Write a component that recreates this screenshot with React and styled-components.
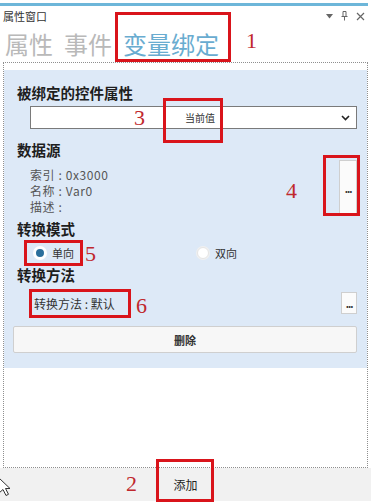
import React from 'react';
import styled, { createGlobalStyle } from 'styled-components';

const GlobalStyle = createGlobalStyle`
    html, body {
        margin: 0;
        padding: 0;
        background: #fff;
    }
    body {
        font-family: "Noto Sans CJK SC", "Noto Sans", sans-serif;
        color: #222;
    }
`;

const Window = styled.div`
    position: relative;
    width: 371px;
    height: 502px;
    overflow: hidden;
    background: #fff;
`;

const AccentLine = styled.div`
    margin-top: 3px;
    width: 368px;
    height: 3px;
    background: #6db6d9;
`;

const TitleBar = styled.div`
    display: flex;
    align-items: center;
    justify-content: space-between;
    height: 16px;
    padding: 2px 6px 0 3px;
`;

const Title = styled.span`
    font-size: 11px;
    line-height: 16px;
    color: #333;
`;

const TitleIcons = styled.div`
    display: flex;
    align-items: center;
    gap: 8px;
    color: #666;
`;

const Tabs = styled.div`
    display: flex;
    align-items: flex-end;
    gap: 11px;
    height: 38px;
    padding-left: 5px;
`;

const Tab = styled.span`
    font-size: 24px;
    line-height: 36px;
    color: ${p => (p.$active ? '#69acd0' : '#b9b9b9')};
`;

const Panel = styled.div`
    margin: 0 3px 0 3px;
    height: 406px;
    border: 1px dotted #8f8f8f;
    padding-top: 7px;
    box-sizing: border-box;
`;

const Section = styled.div`
    background: #dde9f7;
    height: 298px;
    padding: 14px 10px 0 13px;
    box-sizing: border-box;
`;

const Heading = styled.div`
    font-size: 14.5px;
    font-weight: 700;
    line-height: 18px;
    color: #1e1e1e;
    margin-top: ${p => p.$top || 0}px;
`;

const Select = styled.div`
    display: flex;
    align-items: center;
    margin: 4px 0 0 13px;
    height: 23px;
    background: #fff;
    border: 1px solid #7a7a7a;
    box-sizing: border-box;
    padding: 0 6px 0 154px;
`;

const SelectValue = styled.span`
    flex: 1;
    font-size: 10px;
    color: #333;
`;

const SourceRow = styled.div`
    display: flex;
    justify-content: space-between;
    align-items: flex-start;
    margin-top: 1px;
`;

const InfoList = styled.div`
    padding: 7px 0 0 13px;
`;

const InfoLine = styled.div`
    font-size: 12px;
    line-height: 16px;
    letter-spacing: 0.6px;
    color: #555;
`;

const MoreButton = styled.div`
    display: flex;
    align-items: center;
    justify-content: center;
    width: ${p => p.$w}px;
    height: ${p => p.$h}px;
    background: #fbfbfb;
    border: 1px solid #cfcfcf;
    box-sizing: border-box;
    font-size: 10px;
    font-weight: 700;
    color: #333;
    letter-spacing: -1px;
`;

const RadioRow = styled.div`
    display: flex;
    align-items: center;
    height: 20px;
    margin-top: 5px;
    padding-left: 17px;
`;

const Radio = styled.label`
    display: flex;
    align-items: center;
    gap: 6px;
    width: ${p => p.$w || 'auto'};
    font-size: 11px;
    color: #333;
`;

const Dot = styled.span`
    width: 12px;
    height: 12px;
    border-radius: 50%;
    box-sizing: border-box;
    background: ${p => (p.$on ? '#2b6f9c' : '#fff')};
    border: ${p => (p.$on ? '2px solid #fff' : '1px solid #e5e5e5')};
    box-shadow: 0 0 0 1px ${p => (p.$on ? '#fff' : '#f0f0f0')};
`;

const MethodRow = styled.div`
    display: flex;
    align-items: center;
    justify-content: space-between;
    margin-top: 6px;
    height: 26px;
`;

const MethodText = styled.span`
    padding-left: 17px;
    font-size: 12px;
    color: #333;
`;

const DeleteButton = styled.div`
    margin: 10px 0 0 -4px;
    height: 27px;
    display: flex;
    align-items: center;
    justify-content: center;
    background: #f7f7f7;
    border: 1px solid #cfcfcf;
    border-radius: 2px;
    box-sizing: border-box;
    font-size: 11px;
    font-weight: 700;
    color: #333;
`;

const BottomBar = styled.div`
    height: 33px;
    display: flex;
    align-items: center;
    justify-content: center;
    background: #f1f1f1;
    font-size: 12px;
    color: #222;
`;

const Mark = styled.div`
    position: absolute;
    left: ${p => p.$x}px;
    top: ${p => p.$y}px;
    width: ${p => p.$w}px;
    height: ${p => p.$h}px;
    border: 3px solid #d9141b;
    box-sizing: border-box;
    pointer-events: none;
`;

const Num = styled.span`
    position: absolute;
    left: ${p => p.$x}px;
    top: ${p => p.$y}px;
    font-family: "Liberation Serif", serif;
    font-size: 22px;
    line-height: 22px;
    color: #c0282d;
`;

const Cursor = styled.svg`
    position: absolute;
    left: -2px;
    top: 477px;
`;

const Chevron = () => (
    <svg width="9" height="6" viewBox="0 0 9 6">
        <path d="M1 1l3.5 3.5L8 1" fill="none" stroke="#222" strokeWidth="1.6" />
    </svg>
);

const WindowIcons = () => (
    <TitleIcons>
        <svg width="7" height="5" viewBox="0 0 7 5"><path d="M0 0h7L3.5 4.5z" fill="#666" /></svg>
        <svg width="7" height="10" viewBox="0 0 7 10">
            <path d="M2 0.5h3v5H2zM0.5 5.5h6M3.5 5.5v4" fill="none" stroke="#666" strokeWidth="1" />
        </svg>
        <svg width="9" height="9" viewBox="0 0 9 9"><path d="M1 1l7 7M8 1L1 8" stroke="#666" strokeWidth="1.2" /></svg>
    </TitleIcons>
);

function App() {
    return (
        <Window>
            <GlobalStyle />
            <AccentLine />
            <TitleBar>
                <Title>属性窗口</Title>
                <WindowIcons />
            </TitleBar>
            <Tabs>
                <Tab>属性</Tab>
                <Tab>事件</Tab>
                <Tab $active>变量绑定</Tab>
            </Tabs>
            <Panel>
                <Section>
                    <Heading>被绑定的控件属性</Heading>
                    <Select>
                        <SelectValue>当前值</SelectValue>
                        <Chevron />
                    </Select>
                    <Heading $top={12}>数据源</Heading>
                    <SourceRow>
                        <InfoList>
                            <InfoLine>索引 : 0x3000</InfoLine>
                            <InfoLine>名称 : Var0</InfoLine>
                            <InfoLine>描述 :</InfoLine>
                        </InfoList>
                        <MoreButton $w={18} $h={56}>...</MoreButton>
                    </SourceRow>
                    <Heading $top={4}>转换模式</Heading>
                    <RadioRow>
                        <Radio $w="163px"><Dot $on />单向</Radio>
                        <Radio><Dot />双向</Radio>
                    </RadioRow>
                    <Heading $top={3}>转换方法</Heading>
                    <MethodRow>
                        <MethodText>转换方法 : 默认</MethodText>
                        <MoreButton $w={16} $h={22}>...</MoreButton>
                    </MethodRow>
                    <DeleteButton>删除</DeleteButton>
                </Section>
            </Panel>
            <BottomBar>添加</BottomBar>

            <Mark $x={115} $y={12} $w={116} $h={50} />
            <Num $x={246} $y={30}>1</Num>
            <Mark $x={163} $y={98} $w={60} $h={45} />
            <Num $x={134} $y={107}>3</Num>
            <Mark $x={323} $y={155} $w={37} $h={61} />
            <Num $x={286} $y={180}>4</Num>
            <Mark $x={24} $y={240} $w={59} $h={26} />
            <Num $x={85} $y={243}>5</Num>
            <Mark $x={29} $y={289} $w={102} $h={29} />
            <Num $x={136} $y={295}>6</Num>
            <Mark $x={156} $y={459} $w={58} $h={43} />
            <Num $x={126} $y={473}>2</Num>

            <Cursor width="14" height="20" viewBox="0 0 14 20">
                <path d="M1 1v15l4-3.5 3 6 2.5-1.2-3-5.8H12z" fill="#fff" stroke="#333" strokeWidth="1" />
            </Cursor>
        </Window>
    );
}

export default App;
